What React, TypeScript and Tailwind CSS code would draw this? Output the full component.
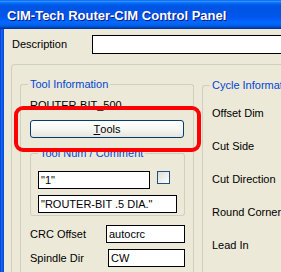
import React from 'react';

interface GroupProps {
  title: string;
  className?: string;
  bodyClassName?: string;
  children?: React.ReactNode;
}

// XP style group box, the title sits in the top border line
const Group: React.FC<GroupProps> = ({ title, className = '', bodyClassName = '', children }) => (
  <div className={'flex flex-col shrink-0 ' + className}>
    <div className="flex h-[13px] shrink-0">
      <div className="w-[8px] h-[7px] mt-[6px] shrink-0 border-t border-l border-[#D0D0BF] rounded-tl-[3px]" />
      <span className="px-[2px] text-[#0046D5] whitespace-nowrap">{title}</span>
      <div className="flex-1 min-w-0 h-[7px] mt-[6px] border-t border-r border-[#D0D0BF] rounded-tr-[3px]" />
    </div>
    <div className={'flex-1 border-l border-r border-b border-[#D0D0BF] rounded-b-[3px] ' + bodyClassName}>
      {children}
    </div>
  </div>
);

const Field: React.FC<{ value?: string; className?: string }> = ({ value = '', className = '' }) => (
  <input
    readOnly
    value={value}
    className={'shrink-0 h-[18px] border border-black bg-white pl-[2px] text-[11px] leading-[13px] outline-none ' + className}
  />
);

const cycleRows = ['Offset Dim', 'Cut Side', 'Cut Direction', 'Round Corners', 'Lead In'];

export default function App() {
  return (
    <div className="relative w-[281px] h-[272px] overflow-hidden flex flex-col font-['Liberation_Sans',Arial,sans-serif] text-[11px] leading-[13px] text-black">
      {/* title bar */}
      <div className="h-[29px] shrink-0 flex items-center pl-[7px] pt-[2px] whitespace-nowrap text-white font-bold text-[13px] [text-shadow:1px_1px_#0A1883] bg-[linear-gradient(to_bottom,#0058EE_0%,#3593FF_4%,#288EFF_6%,#127DFF_8%,#036FFC_10%,#0262EE_14%,#0057E5_20%,#0054E3_24%,#0055EB_56%,#005BF5_66%,#026AFE_76%,#0062EF_86%,#0052D6_92%,#0040AB_96%,#003092_100%)]">
        CIM-Tech Router-CIM Control Panel
      </div>

      <div className="flex flex-1 min-h-0">
        <div className="w-[4px] shrink-0 bg-[linear-gradient(to_right,#0831D9,#166AEE_40%,#0855DD_70%,#0841D5)]" />

        <div className="flex-1 min-w-0 overflow-hidden bg-[#ECE9D8] flex flex-col">
          <div className="flex items-center pl-[8px] pt-[6px] shrink-0">
            <span className="w-[80px] shrink-0">Description</span>
            <input readOnly className="w-[220px] shrink-0 h-[19px] border border-black bg-white outline-none" />
          </div>

          <div className="ml-[7px] mt-[10px] w-[300px] flex-1 shrink-0 border-l border-t border-[#D0D0BF] rounded-tl-[4px] flex items-start pl-[8px]">
            <Group title="Tool Information" className="w-[174px] h-[230px] mt-[13px]">
              <div className="pl-[9px] mt-[8px] whitespace-nowrap">ROUTER-BIT_500</div>

              <button className="ml-[9px] mt-[8px] w-[154px] h-[18px] flex items-center justify-center border border-[#003C74] rounded-[3px] bg-[linear-gradient(to_bottom,#FFFFFF,#F5F5F1_55%,#E6E4DC)] text-[11px] leading-[13px]">
                <span className="underline">T</span>ools
              </button>

              <Group title="Tool Num / Comment" className="ml-[9px] mt-[9px] w-[155px]" bodyClassName="pl-[7px] pt-[11px] pb-[2px]">
                <div className="flex items-start">
                  <Field value={'"1"'} className="w-[112px]" />
                  <div className="ml-[7px] w-[13px] h-[13px] shrink-0 border border-[#1C5180] bg-[linear-gradient(to_bottom_right,#DCDCD7,#FFFFFF)]" />
                </div>
                <Field value={'"ROUTER-BIT .5 DIA."'} className="mt-[6px] w-[139px] block" />
              </Group>

              <div className="flex items-center pl-[9px] mt-[9px]">
                <span className="w-[76px] shrink-0">CRC Offset</span>
                <Field value="autocrc" className="w-[79px]" />
              </div>
              <div className="flex items-center pl-[9px] mt-[6px]">
                <span className="w-[78px] shrink-0">Spindle Dir</span>
                <Field value="CW" className="w-[77px]" />
              </div>
            </Group>

            <Group title="Cycle Information" className="ml-[8px] mt-[14px] w-[120px] h-[230px]" bodyClassName="pl-[9px] pt-[5px]">
              {cycleRows.map((label) => (
                <div key={label} className="h-[33px] flex items-center whitespace-nowrap">
                  {label}
                </div>
              ))}
            </Group>
          </div>
        </div>
      </div>

      {/* red highlight drawn over the Tools button */}
      <div className="absolute left-[14px] top-[106px] w-[187px] h-[46px] border-4 border-[#FF0000] rounded-[9px] pointer-events-none" />
    </div>
  );
}
